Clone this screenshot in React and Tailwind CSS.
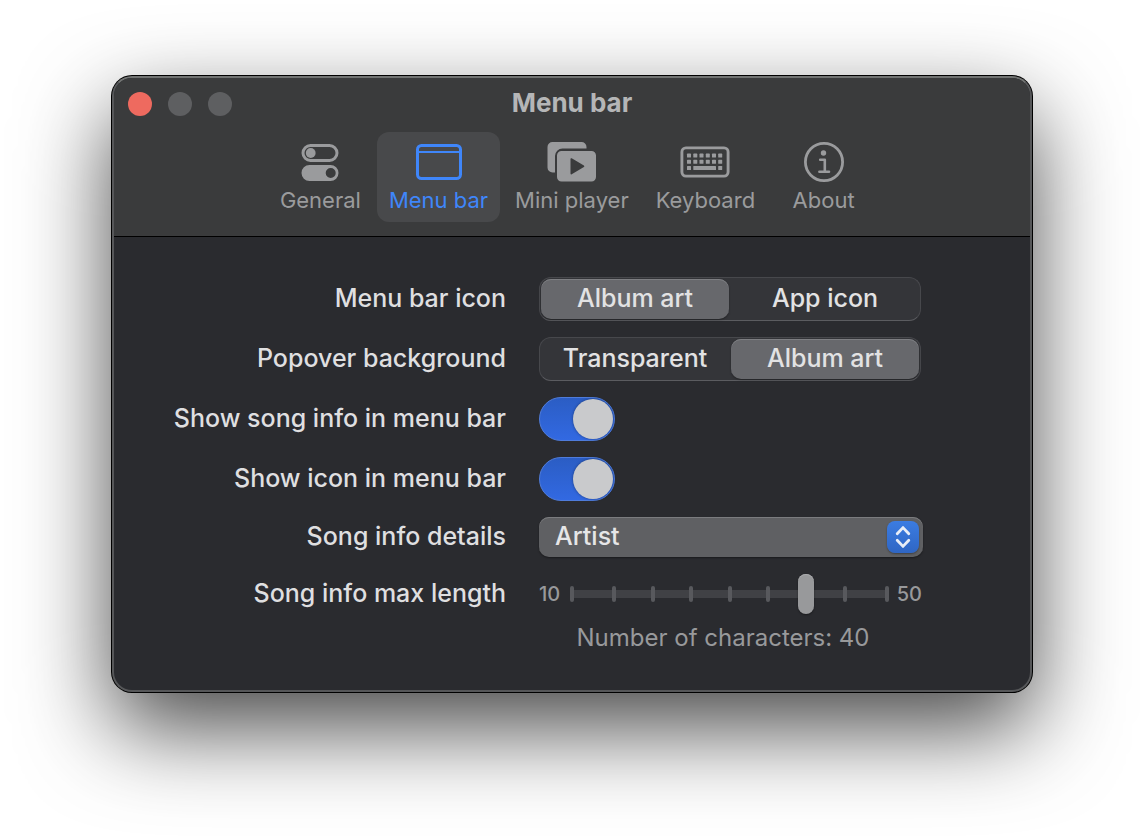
import { useState } from "react";

function GeneralIcon() {
  return (
    <svg width="38" height="38" viewBox="0 0 38 38" aria-hidden="true">
      <rect x="2" y="2.5" width="34" height="15" rx="7.5" fill="none" stroke="currentColor" strokeWidth="3" />
      <circle cx="9.7" cy="10" r="4.9" fill="currentColor" />
      <path
        fill="currentColor"
        fillRule="evenodd"
        d="M8.500 22h21a8 8 0 0 1 0 16H8.500a8 8 0 0 1 0-16Zm21.200 3a5 5 0 1 0 0 10a5 5 0 0 0 0-10Z"
      />
    </svg>
  );
}

function MenuBarIcon() {
  return (
    <svg width="46" height="36" viewBox="0 0 46 36" fill="none" stroke="currentColor" aria-hidden="true">
      <rect x="1.5" y="1.5" width="43" height="33" rx="4" strokeWidth="3" />
      <path d="M2 8h42" strokeWidth="2.2" />
    </svg>
  );
}

function MiniPlayerIcon() {
  return (
    <svg width="50" height="42" viewBox="0 0 50 42" fill="currentColor" aria-hidden="true">
      <path d="M5.5 1H34.500a5 5 0 0 1 5 5V7.500H15.500a7.500 7.500 0 0 0-7.500 7.500V31.500H5.500a5 5 0 0 1-5-5V6A5 5 0 0 1 5.500 1Z" />
      <path
        fillRule="evenodd"
        d="M14.500 10H44.500a4.500 4.500 0 0 1 4.500 4.500V36A4.500 4.500 0 0 1 44.500 40.500H14.500A4.500 4.500 0 0 1 10 36V14.500A4.500 4.500 0 0 1 14.500 10ZM23.500 18V32.600q0 1.200 1.200.6L36.900 26q1-.7 0-1.400L24.700 17.300q-1.200-.5-1.200.7Z"
      />
    </svg>
  );
}

function KeyboardIcon() {
  const columns = [7, 13.3, 19.5, 25.8, 32, 38.2];
  return (
    <svg width="50" height="32" viewBox="0 0 50 32" fill="currentColor" aria-hidden="true">
      <rect x="1.900" y="1.900" width="46.200" height="28.200" rx="4" fill="none" stroke="currentColor" strokeWidth="2.900" />
      {columns.map((x) => (
        <rect key={`a${x}`} x={x} y="7.600" width="4" height="4" rx="0.600" />
      ))}
      {columns.map((x) => (
        <rect key={`b${x}`} x={x} y="13.800" width="4" height="4" rx="0.600" />
      ))}
      <rect x="7" y="20" width="4" height="4" rx="0.600" />
      <rect x="13.300" y="20" width="22.700" height="4" rx="0.600" />
      <rect x="38.200" y="20" width="4" height="4" rx="0.600" />
    </svg>
  );
}

function AboutIcon() {
  return (
    <svg width="40" height="40" viewBox="0 0 40 40" aria-hidden="true">
      <circle cx="20" cy="20" r="18.600" fill="none" stroke="currentColor" strokeWidth="2.800" />
      <circle cx="19.500" cy="11" r="2.700" fill="currentColor" />
      <path
        d="M16.200 17.800h4.600v12M15.400 29.800h9.600"
        fill="none"
        stroke="currentColor"
        strokeWidth="2.600"
        strokeLinecap="round"
        strokeLinejoin="round"
      />
    </svg>
  );
}

const tabs = [
  { name: "General", Icon: GeneralIcon },
  { name: "Menu bar", Icon: MenuBarIcon },
  { name: "Mini player", Icon: MiniPlayerIcon },
  { name: "Keyboard", Icon: KeyboardIcon },
  { name: "About", Icon: AboutIcon },
];

const rowLabel = "pr-px pb-0.5 text-right text-[25px] leading-8 font-medium whitespace-nowrap text-[#dfdfe0]";

function Segmented({ name, labelId, options, value, onChange }) {
  return (
    <div
      role="radiogroup"
      aria-labelledby={labelId}
      className="grid h-11 max-w-[382px] grid-cols-2 gap-0.5 rounded-xl border border-[#47484c] border-b-[#5b5c60] bg-[#343539] p-px"
    >
      {options.map((option) => (
        <label
          key={option}
          className="relative flex items-center justify-center rounded-[10px] pb-0.5 text-[25px] leading-8 font-medium whitespace-nowrap text-[#e2e2e3] has-checked:bg-[#67686c] has-checked:shadow-[inset_0_1px_0_#7e7f83,0_1px_2px_rgba(0,0,0,0.35)]"
        >
          <input
            type="radio"
            name={name}
            value={option}
            checked={value === option}
            onChange={() => onChange(option)}
            className="sr-only"
          />
          {option}
        </label>
      ))}
    </div>
  );
}

function Toggle({ id, checked, onChange }) {
  return (
    <input
      id={id}
      type="checkbox"
      role="switch"
      checked={checked}
      onChange={(e) => onChange(e.target.checked)}
      className="flex h-11 w-[76px] appearance-none items-center rounded-full border border-[#55565a] bg-[#3a3b3f] p-px before:size-10 before:rounded-full before:bg-[#c9cacc] before:shadow-[0_0_3px_rgba(0,0,0,0.4)] checked:justify-end checked:border-[#4f7cdb] checked:bg-linear-to-b checked:from-[#2b5dc4] checked:to-[#3269e2]"
    />
  );
}

function LengthSlider({ id, value, onChange }) {
  return (
    <div className="flex h-[42px] max-w-96 items-center text-xl leading-6 font-medium text-[#98999b]">
      <span className="w-[29px]">10</span>
      <div className="grid flex-1 items-center">
        <div className="col-start-1 row-start-1 mx-1 h-2 bg-[#404145]" />
        <div className="col-start-1 row-start-1 mx-0.5 flex">
          <span className="h-4 w-1 rounded-sm bg-[#58595d]" />
          <div className="mx-[38px] flex flex-1 justify-between">
            {[15, 20, 25, 30, 35, 40, 45].map((n) => (
              <span key={n} className="h-4 w-1 rounded-sm bg-[#58595d]" />
            ))}
          </div>
          <span className="h-4 w-1 rounded-sm bg-[#58595d]" />
        </div>
        <input
          id={id}
          type="range"
          min="10"
          max="50"
          step="5"
          value={value}
          onChange={(e) => onChange(Number(e.target.value))}
          className="col-start-1 row-start-1 h-10 w-full appearance-none bg-transparent [&::-webkit-slider-thumb]:h-10 [&::-webkit-slider-thumb]:w-4 [&::-webkit-slider-thumb]:appearance-none [&::-webkit-slider-thumb]:rounded-full [&::-webkit-slider-thumb]:bg-[#98999b] [&::-webkit-slider-thumb]:shadow-[inset_0_1px_0_#a9aaac,0_1px_2px_rgba(0,0,0,0.4)]"
        />
      </div>
      <span className="w-8 pr-px text-right">50</span>
    </div>
  );
}

export default function App() {
  const [tab, setTab] = useState("Menu bar");
  const [icon, setIcon] = useState("Album art");
  const [background, setBackground] = useState("Album art");
  const [showInfo, setShowInfo] = useState(true);
  const [showIcon, setShowIcon] = useState(true);
  const [details, setDetails] = useState("Artist");
  const [length, setLength] = useState(40);

  return (
    <div className="min-h-screen bg-white px-28 pt-[76px] pb-36 font-['Inter',sans-serif]">
      <main className="overflow-hidden rounded-[20px] border-2 border-[#565759] border-t-[#717372] bg-[#2a2b2f] shadow-[0_0_0_1px_#000,0_36px_90px_rgba(0,0,0,0.72)]">
        <header className="border-b border-black bg-[#3a3b3c] pt-3.5 pb-3.5">
          <div className="grid h-6 grid-cols-[1fr_auto_1fr] items-center px-3.5">
            <div className="flex gap-4">
              <button type="button" aria-label="Close" className="size-6 rounded-full bg-[#ee6a5f]" />
              <button type="button" aria-label="Minimize" className="size-6 rounded-full bg-[#5e5f61]" />
              <button type="button" aria-label="Zoom" className="size-6 rounded-full bg-[#5e5f61]" />
            </div>
            <h1 className="pb-0.5 text-[26px] leading-[22px] font-bold text-[#b5b6b7]">Menu bar</h1>
          </div>
          <nav className="mt-4 flex justify-center gap-[3px]">
            {tabs.map(({ name, Icon }) => (
              <button
                key={name}
                type="button"
                aria-pressed={tab === name}
                onClick={() => setTab(name)}
                className="flex h-[90px] min-w-[107px] flex-col items-center rounded-xl px-3 pt-2 text-[22px] leading-7 whitespace-nowrap text-[#9a9b9d] aria-pressed:bg-[#48494b] aria-pressed:text-[#3f86fa]"
              >
                <span className="flex h-11 items-center">
                  <Icon />
                </span>
                <span className="mt-0.5">{name}</span>
              </button>
            ))}
          </nav>
        </header>

        <form className="grid grid-cols-[4fr_5fr] items-center gap-x-8 gap-y-4 px-px pt-10 pb-9">
          <span id="icon-label" className={rowLabel}>Menu bar icon</span>
          <Segmented
            name="icon"
            labelId="icon-label"
            options={["Album art", "App icon"]}
            value={icon}
            onChange={setIcon}
          />

          <span id="background-label" className={rowLabel}>Popover background</span>
          <Segmented
            name="background"
            labelId="background-label"
            options={["Transparent", "Album art"]}
            value={background}
            onChange={setBackground}
          />

          <label htmlFor="show-info" className={rowLabel}>Show song info in menu bar</label>
          <Toggle id="show-info" checked={showInfo} onChange={setShowInfo} />

          <label htmlFor="show-icon" className={rowLabel}>Show icon in menu bar</label>
          <Toggle id="show-icon" checked={showIcon} onChange={setShowIcon} />

          <label htmlFor="details" className={rowLabel}>Song info details</label>
          <div className="grid max-w-96 items-center">
            <select
              id="details"
              value={details}
              onChange={(e) => setDetails(e.target.value)}
              className="col-start-1 row-start-1 h-10 appearance-none rounded-[10px] bg-[#5f6063] px-4 pb-0.5 text-[25px] leading-8 font-medium text-[#e6e6e7] shadow-[inset_0_1px_0_#7b7c7f,0_1px_2px_rgba(0,0,0,0.4)]"
            >
              <option>Artist</option>
              <option>Song</option>
              <option>Artist and song</option>
            </select>
            <span className="pointer-events-none col-start-1 row-start-1 mr-1 flex size-8 items-center justify-center justify-self-end rounded-lg bg-linear-to-b from-[#3b7ce2] to-[#2f66c4] shadow-[0_1px_2px_rgba(0,0,0,0.35)]">
              <svg
                width="16"
                height="24"
                viewBox="0 0 16 24"
                fill="none"
                stroke="#e8edf6"
                strokeWidth="2.800"
                strokeLinecap="round"
                strokeLinejoin="round"
                aria-hidden="true"
              >
                <path d="M2.200 8.800L8 2.600L13.800 8.800M2.200 15.200L8 21.400L13.800 15.200" />
              </svg>
            </span>
          </div>

          <label htmlFor="length" className={rowLabel}>Song info max length</label>
          <LengthSlider id="length" value={length} onChange={setLength} />

          <output
            htmlFor="length"
            className="col-start-2 -mt-[9px] max-w-[368px] text-center text-2xl leading-8 whitespace-nowrap text-[#98999b]"
          >
            Number of characters: {length}
          </output>
        </form>
      </main>
    </div>
  );
}
